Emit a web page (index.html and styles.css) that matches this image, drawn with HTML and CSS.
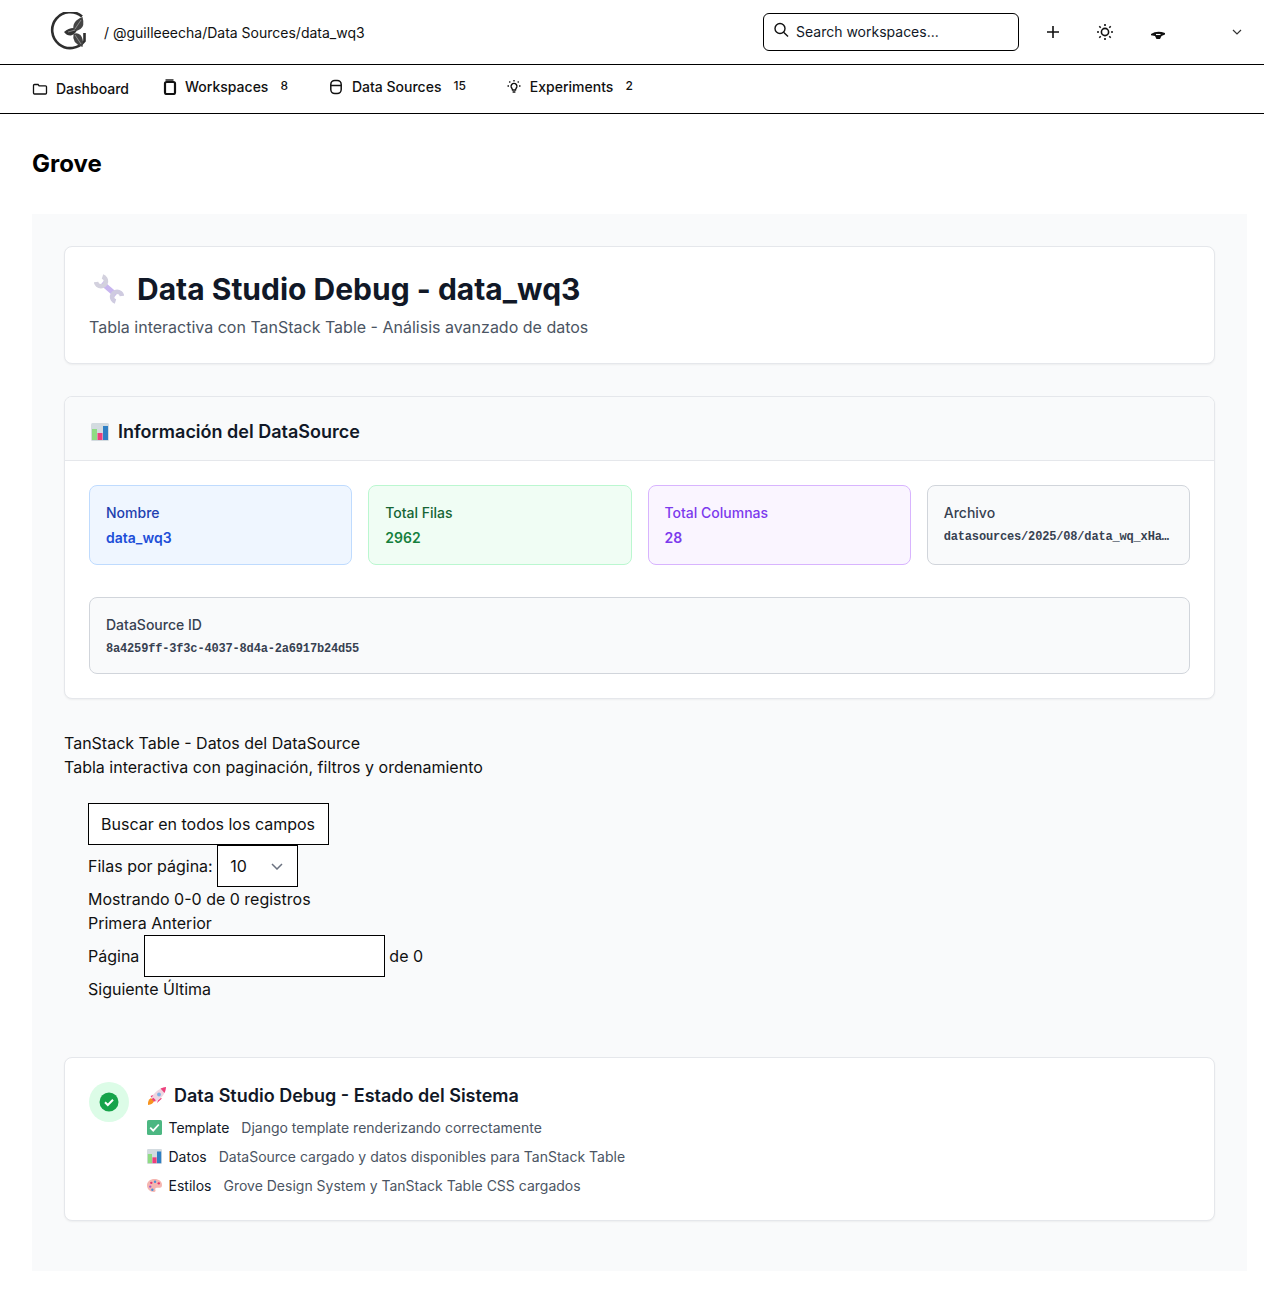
FILE: index.html
```html
<!DOCTYPE html>
<html lang="es">
<head>
<meta charset="utf-8">
<title>Grove - Data Studio Debug</title>
<link rel="stylesheet" href="styles.css">
</head>
<body>
<svg class="defs" width="0" height="0" aria-hidden="true">
  <symbol id="chart" viewBox="0 0 18 18">
    <rect x="0" y="0" width="18" height="18" rx="1.500" fill="#d3dbe0"/>
    <rect x="1" y="6" width="5" height="11" fill="#8fdc83"/>
    <rect x="6.500" y="10" width="5" height="7" fill="#ee3f7c"/>
    <rect x="12" y="3" width="5" height="14" fill="#2f7fc4"/>
  </symbol>
</svg>
<header class="topbar">
  <div class="brand">
    <svg class="logo" width="38" height="40" viewBox="0 0 38 40">
      <path d="M32 4.500A18 18 0 1 0 34.500 29V21" fill="none" stroke="#2e2e2e" stroke-width="2.600"/>
      <path d="M14 20Q20 14.500 27.500 16.500Q26 22 21 23.500Q17 24 14 20z" fill="#333"/>
      <path d="M23.500 19Q21.500 9 32.500 5Q35 14 30.500 17Q27 19.500 23.500 19z" fill="#444"/>
      <path d="M23.500 22Q27 20 30.500 23Q34 27 32.500 35Q21.500 31 23.500 22z" fill="#444"/>
      <path d="M18 20L25 18M25 17L31 8M25 23L31 32" stroke="#aaa" stroke-width=".7" fill="none"/>
    </svg>
    <span class="crumb">/ @guilleeecha/Data Sources/data_wq3</span>
  </div>
  <div class="top-actions">
    <label class="search">
      <svg width="16" height="16" viewBox="0 0 16 16" fill="none" stroke="#111" stroke-width="1.400"><circle cx="7" cy="6.500" r="5"/><path d="M10.600 10.200L15 14.400"/></svg>
      <span>Search workspaces...</span>
    </label>
    <svg class="ic-plus" width="14" height="14" viewBox="0 0 14 14" fill="none" stroke="#111" stroke-width="1.600"><path d="M7 1v12M1 7h12"/></svg>
    <svg class="ic-sun" width="18" height="18" viewBox="0 0 18 18" fill="none" stroke="#111" stroke-width="1.600"><circle cx="9" cy="9" r="3.600"/><path d="M9 1v2M9 15v2M1 9h2M15 9h2M3.300 3.300l1.400 1.400M13.300 13.300l1.400 1.400M3.300 14.700l1.400-1.400M13.300 4.700l1.400-1.400"/></svg>
    <svg class="ic-eye" width="14" height="8" viewBox="0 0 14 8"><path d="M0 3Q6-1 14 2V3.500L10.500 5 9 8H5.500L4 5 0 4.200z" fill="#111"/><path d="M5 3.500h4.500" stroke="#fff" stroke-width="1.100"/></svg>
    <svg class="ic-chev" width="10" height="6" viewBox="0 0 10 6" fill="none" stroke="#333" stroke-width="1.200"><path d="M1 1l4 4 4-4"/></svg>
  </div>
</header>
<nav class="tabs">
  <a class="tab tab-low">
    <svg width="16" height="16" viewBox="0 0 16 16" fill="none" stroke="#111" stroke-width="1.300"><path d="M1.500 4.500a1 1 0 0 1 1-1h3.600l1 1.300h6.400a1 1 0 0 1 1 1v6.200a1 1 0 0 1-1 1h-11a1 1 0 0 1-1-1z"/></svg>
    <span>Dashboard</span>
  </a>
  <a class="tab">
    <svg width="16" height="16" viewBox="0 0 16 16" fill="none" stroke="#111"><rect x="4" y="3" width="10" height="12" rx="1.600" stroke-width="2.200"/><path d="M4.500 1h8" stroke-width="1.400"/></svg>
    <span>Workspaces</span><small>8</small>
  </a>
  <a class="tab">
    <svg width="16" height="16" viewBox="0 0 16 16" fill="none" stroke="#111" stroke-width="1.500"><rect x="2.800" y="1.400" width="10.400" height="13.200" rx="4"/><path d="M2.800 6.500h10.400"/></svg>
    <span>Data Sources</span><small>15</small>
  </a>
  <a class="tab">
    <svg width="16" height="16" viewBox="0 0 16 16" fill="none" stroke="#111" stroke-width="1.400"><path d="M5.200 8a2.900 2.900 0 1 1 5.600 0c-.3 1-1.200 1.600-1.300 3H6.500C6.400 9.600 5.500 9 5.200 8z"/><path d="M6.600 13h2.800M8 1v1.500M1.500 7H3M13 7h1.500M3.300 2.600l1 1M12.700 2.600l-1 1"/></svg>
    <span>Experiments</span><small>2</small>
  </a>
</nav>
<h2 class="org">Grove</h2>
<main class="studio">
  <section class="card hero">
    <h1>
      <svg class="wrench" width="30" height="30" viewBox="0 0 30 30" fill="none"><path d="M8 9L22 21" stroke="#c8b6ef" stroke-width="5"/><path d="M8.500 2.500A5 5 0 1 1 2 8" stroke="#d3d1de" stroke-width="4.500"/><path d="M21.500 27.500A5 5 0 1 1 28 22" stroke="#cfcbe0" stroke-width="4.500"/></svg>
      <span>Data Studio Debug - data_wq3</span>
    </h1>
    <p>Tabla interactiva con TanStack Table - Análisis avanzado de datos</p>
  </section>
  <section class="card info">
    <header class="info-head">
      <svg width="18" height="18"><use href="#chart"/></svg>
      <h3>Información del DataSource</h3>
    </header>
    <div class="info-body">
      <div class="stats">
        <div class="stat blue"><div class="stat-label">Nombre</div><div class="stat-value">data_wq3</div></div>
        <div class="stat green"><div class="stat-label">Total Filas</div><div class="stat-value">2962</div></div>
        <div class="stat purple"><div class="stat-label">Total Columnas</div><div class="stat-value">28</div></div>
        <div class="stat gray"><div class="stat-label">Archivo</div><div class="mono">datasources/2025/08/data_wq_xHa…</div></div>
      </div>
      <div class="stat gray idbox"><div class="stat-label">DataSource ID</div><div class="mono">8a4259ff-3f3c-4037-8d4a-2a6917b24d55</div></div>
    </div>
  </section>
  <section class="table-area">
    <div>TanStack Table - Datos del DataSource</div>
    <div>Tabla interactiva con paginación, filtros y ordenamiento</div>
    <div class="controls">
      <input class="field" type="text" placeholder="Buscar en todos los campos">
      <div class="row"><span>Filas por página:</span>
        <span class="select"><span>10</span><svg width="12" height="7" viewBox="0 0 12 7" fill="none" stroke="#6b7280" stroke-width="1.500"><path d="M1 1l5 5 5-5"/></svg></span>
      </div>
      <div>Mostrando 0-0 de 0 registros</div>
      <div>Primera Anterior</div>
      <div class="row page-row"><span>Página</span><input class="field" type="text"><span>de 0</span></div>
      <div>Siguiente Última</div>
    </div>
  </section>
  <section class="card status">
    <div class="status-ring"><svg width="20" height="20" viewBox="0 0 20 20"><circle cx="10" cy="10" r="9.500" fill="#16a34a"/><path d="M6 10.200l2.800 2.800L14 7.700" fill="none" stroke="#fff" stroke-width="2"/></svg></div>
    <div class="status-body">
      <h3>
        <svg width="20" height="20" viewBox="0 0 20 20"><path d="M1 19q-.5-5 3-7l3 3q-1 3.500-6 4z" fill="#f7931e"/><path d="M3.500 10L9 8 6 13.500zM12 11.500L10 17l5-4.500z" fill="#ee3f7c"/><path d="M4.500 12C7.500 5.500 13 2 19 1c-.5 6-4 11.500-10.500 15z" fill="#eed5e0"/><path d="M13.500 2.600C15.500 1.800 17.500 1.300 19 1c-.1 1.500-.6 4-1.500 6z" fill="#ee3f7c"/><path d="M5.500 12.500L8 15" stroke="#ee3f7c" stroke-width="2.400"/><circle cx="12" cy="8.500" r="1.900" fill="#7fb2e5"/></svg>
        <span>Data Studio Debug - Estado del Sistema</span>
      </h3>
      <ul>
        <li>
          <svg width="15" height="15" viewBox="0 0 14 14"><rect width="14" height="14" rx="1.500" fill="#4cb782"/><path d="M3 7.200l2.800 2.800L11 4.200" fill="none" stroke="#fff" stroke-width="1.700"/></svg>
          <span class="k">Template</span><span class="v">Django template renderizando correctamente</span>
        </li>
        <li>
          <svg width="15" height="15"><use href="#chart"/></svg>
          <span class="k">Datos</span><span class="v">DataSource cargado y datos disponibles para TanStack Table</span>
        </li>
        <li>
          <svg width="15" height="15" viewBox="0 0 14 14"><path d="M7 1C3 1 0 3.500 0 7s3 6 6.500 6c1.500 0 1.800-1 1.300-2s0-2 1.500-2H12c1.500 0 2-1 2-2.500C14 3 11 1 7 1z" fill="#f5b5b0"/><circle cx="4" cy="4.500" r="1.100" fill="#e8336d"/><circle cx="7.500" cy="3.500" r="1.100" fill="#4a90d9"/><circle cx="3" cy="8" r="1.100" fill="#a45cc9"/><circle cx="11" cy="5" r="1.100" fill="#e8336d"/><circle cx="5" cy="11" r="1.100" fill="#4a90d9"/></svg>
          <span class="k">Estilos</span><span class="v">Grove Design System y TanStack Table CSS cargados</span>
        </li>
      </ul>
    </div>
  </section>
</main>
</body>
</html>
```
FILE: styles.css
```css
* { box-sizing: border-box; }
html, body { margin: 0; padding: 0; }
body {
  font-family: Inter, "Liberation Sans", sans-serif;
  font-size: 16px;
  line-height: 24px;
  color: #111827;
  background: #fff;
  height: 1303px;
}
.defs { position: absolute; }
.topbar {
  height: 65px;
  border-bottom: 1px solid #000;
  display: flex;
  align-items: center;
  justify-content: space-between;
  padding-left: 50px;
}
.brand { display: flex; align-items: center; gap: 16px; }
.logo { display: block; }
.crumb { font-size: 14px; line-height: 20px; color: #111; margin-top: 2px; }
.top-actions { display: flex; align-items: center; height: 100%; padding-right: 22px; }
.search {
  width: 256px;
  height: 38px;
  border: 1px solid #000;
  border-radius: 6px;
  display: flex;
  align-items: center;
  gap: 7px;
  padding: 0 9px;
  font-size: 14px;
  color: #111827;
}
.search svg { margin-top: -4px; }
.ic-plus { margin-left: 27px; }
.ic-sun { margin-left: 36px; }
.ic-eye { margin-left: 37px; margin-top: 6px; }
.ic-chev { margin-left: 67px; }
.tabs {
  height: 49px;
  border-bottom: 1px solid #000;
  display: flex;
  align-items: center;
  gap: 40px;
  padding-left: 32px;
  font-size: 14px;
  font-weight: 500;
  color: #111;
}
.tab { display: flex; align-items: center; gap: 8px; margin-top: -5px; }
.tab-low { margin-top: -1px; margin-right: -8px; }
.tab svg { display: block; }
.tab small { font-size: 12px; margin-left: 4px; margin-top: -2px; line-height: 16px; }
.org {
  margin: 0;
  padding: 34px 32px 0;
  height: 100px;
  font-size: 24px;
  line-height: 32px;
  font-weight: 700;
  color: #000;
}
.studio {
  margin: 0 17px 0 32px;
  padding: 32px;
  height: 1057px;
  background: #f9fafb;
}
.card {
  background: #fff;
  border: 1px solid #e5e7eb;
  border-radius: 8px;
  box-shadow: 0 1px 2px rgba(0, 0, 0, .05);
}
.hero { height: 118px; padding: 24px; margin-bottom: 32px; }
.hero h1 {
  margin: 0;
  display: flex;
  align-items: center;
  gap: 13px;
  font-size: 30px;
  line-height: 36px;
  font-weight: 700;
  color: #111827;
}
.wrench { margin-left: 5px; }
.hero p { margin: 8px 0 0; color: #4b5563; font-size: 16px; line-height: 24px; }
.info { height: 303px; overflow: hidden; margin-bottom: 32px; }
.info-head {
  height: 64px;
  background: #f9fafb;
  border-bottom: 1px solid #e5e7eb;
  padding: 6px 26px 0;
  display: flex;
  align-items: center;
  gap: 9px;
}
.info-head h3 { margin: 0; font-size: 18px; line-height: 28px; font-weight: 600; color: #111827; }
.info-body { padding: 24px; }
.stats { display: grid; grid-template-columns: repeat(4, minmax(0, 1fr)); gap: 16px; margin-bottom: 32px; }
.stat { height: 80px; padding: 16px; border: 1px solid; border-radius: 8px; font-size: 14px; line-height: 20px; min-width: 0; }
.stat-label { font-weight: 500; margin-bottom: 4px; height: 20px; line-height: 22px; }
.stat-value { font-weight: 600; line-height: 24px; }
.blue { background: #eff6ff; border-color: #bfdbfe; color: #1d4ed8; }
.blue .stat-label { color: #1e40af; }
.green { background: #f0fdf4; border-color: #bbf7d0; color: #15803d; }
.green .stat-label { color: #166534; }
.purple { background: #faf5ff; border-color: #d8b4fe; color: #7c3aed; }
.gray { background: #f9fafb; border-color: #d1d5db; color: #374151; }
.idbox { height: 77px; }
.mono {
  font-family: "Liberation Mono", "DejaVu Sans Mono", monospace;
  font-size: 12px;
  letter-spacing: -0.17px;
  line-height: 16px;
  font-weight: 700;
  color: #374151;
  white-space: nowrap;
  overflow: hidden;
  padding-top: 3px;
}
.table-area { color: #111; }
.controls { padding: 24px 24px 0; }
.row { display: flex; align-items: center; gap: 4px; }
.page-row { gap: 4.5px; }
.field {
  display: block;
  width: 241px;
  height: 42px;
  border: 1px solid #000;
  border-radius: 0;
  padding: 8px 12px;
  font: inherit;
  color: #111;
  background: #fff;
}
.field::placeholder { color: #111; opacity: 1; }
.select {
  width: 81px;
  height: 42px;
  border: 1px solid #000;
  background: #fff;
  display: flex;
  align-items: center;
  justify-content: space-between;
  padding: 0 14px 0 12.5px;
}
.status { margin-top: 56px; height: 164px; padding: 24px; display: flex; gap: 18px; }
.status-ring {
  width: 40px;
  height: 40px;
  border-radius: 50%;
  background: #dcfce7;
  display: flex;
  align-items: center;
  justify-content: center;
  flex: none;
}
.status-body h3 {
  margin: 0 0 3px;
  display: flex;
  align-items: center;
  gap: 7px;
  font-size: 18px;
  line-height: 28px;
  font-weight: 600;
  color: #111827;
}
.status-body ul { list-style: none; margin: 0; padding: 0; font-size: 14px; line-height: 20px; }
.status-body li { display: flex; align-items: center; height: 29px; }
.status-body li svg { margin-right: 6.500px; flex: none; }
.k { font-weight: 400; color: #111827; margin-right: 12px; }
.v { color: #4b5563; }
```
